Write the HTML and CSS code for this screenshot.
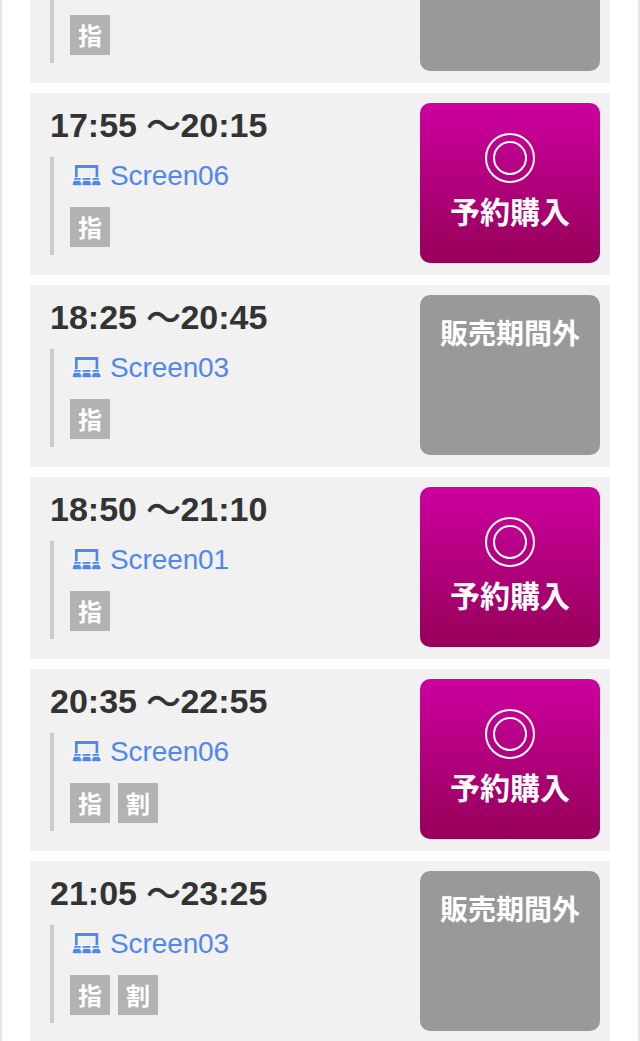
FILE: index.html
```html
<!DOCTYPE html>
<html lang="ja">
    <head>
        <meta charset="utf-8">
        <title>上映スケジュール</title>
        <link rel="stylesheet" href="styles.css">
    </head>
    <body>
        <svg class="defs" width="0" height="0">
            <symbol id="seat" viewBox="0 0 32 24">
                <path class="halo" d="M3 13h27l2 4v5.4H.8V17z"/>
                <path d="M5 1h23.2v12.2h-2.6V4H7.6v9.2H5z"/>
                <path d="M5.2 14h4.6q1 0 1 .8v1H3.6q.4-1.8 1.6-1.8zM13.4 14h6.4q1 0 1.2 1.8h-8.8q.2-1.8 1.2-1.8zM23.4 14H28q1.200 0 1.600 1.800h-7.200v-1q0-.8 1-.8z"/>
                <path d="M2.600 21.200q.2-3.900 2-4.400h4.800q1.600.4 1.800 4.400zM12.200 21.200q.2-4 1.800-4.400h5.200q1.600.4 1.800 4.400zM22 21.200q.2-4 1.800-4.400h4.800q1.800.5 2.200 4.400z"/>
            </symbol>
        </svg>
        <div id="schedule">
            <ul>
                <li class="cut">
                    <div class="info">
                        <div class="detail">
                            <p class="tags"><span>指</span></p>
                        </div>
                    </div>
                    <div class="btn off"></div>
                </li>
                <li>
                    <div class="info">
                        <p class="time">17:55 <span>〜</span>20:15</p>
                        <div class="detail">
                            <a class="screen" href="#"><svg><use href="#seat"/></svg>Screen06</a>
                            <p class="tags"><span>指</span></p>
                        </div>
                    </div>
                    <a class="btn on" href="#"><i class="mark"></i>予約購入</a>
                </li>
                <li>
                    <div class="info">
                        <p class="time">18:25 <span>〜</span>20:45</p>
                        <div class="detail">
                            <a class="screen" href="#"><svg><use href="#seat"/></svg>Screen03</a>
                            <p class="tags"><span>指</span></p>
                        </div>
                    </div>
                    <div class="btn off">販売期間外</div>
                </li>
                <li>
                    <div class="info">
                        <p class="time">18:50 <span>〜</span>21:10</p>
                        <div class="detail">
                            <a class="screen" href="#"><svg><use href="#seat"/></svg>Screen01</a>
                            <p class="tags"><span>指</span></p>
                        </div>
                    </div>
                    <a class="btn on" href="#"><i class="mark"></i>予約購入</a>
                </li>
                <li>
                    <div class="info">
                        <p class="time">20:35 <span>〜</span>22:55</p>
                        <div class="detail">
                            <a class="screen" href="#"><svg><use href="#seat"/></svg>Screen06</a>
                            <p class="tags"><span>指</span><span>割</span></p>
                        </div>
                    </div>
                    <a class="btn on" href="#"><i class="mark"></i>予約購入</a>
                </li>
                <li>
                    <div class="info">
                        <p class="time">21:05 <span>〜</span>23:25</p>
                        <div class="detail">
                            <a class="screen" href="#"><svg><use href="#seat"/></svg>Screen03</a>
                            <p class="tags"><span>指</span><span>割</span></p>
                        </div>
                    </div>
                    <div class="btn off">販売期間外</div>
                </li>
            </ul>
        </div>
    </body>
</html>
```
FILE: styles.css
```css
*{
    box-sizing:border-box;
}
body,div,ul,li,p{
    margin:0;
    padding:0;
}
body{
    font-family:"Liberation Sans","Noto Sans CJK JP",sans-serif;
    color:#333;
    background:#fff;
}
ul{
    list-style-type:none;
}
a{
    text-decoration:none;
}
.defs{
    display:block;
}
#schedule{
    height:1041px;
    padding:0 28px;
    border-left:2px solid #e6e6e6;
    border-right:2px solid #e6e6e6;
    overflow:hidden;
}
#schedule li{
    display:flex;
    justify-content:space-between;
    height:182px;
    margin-bottom:10px;
    padding:10px 10px 0 20px;
    border-radius:2px;
    background:#f1f1f1;
}
.time{
    height:54px;
    font-size:34px;
    font-weight:700;
    line-height:44px;
    white-space:nowrap;
}
.time span{
    font-family:"Noto Sans CJK JP",sans-serif;
    font-weight:400;
    line-height:1;
    vertical-align:-1px;
    -webkit-text-stroke:.8px #333;
}
.detail{
    height:98px;
    padding-left:16px;
    border-left:4px solid #ccc;
}
.screen{
    display:flex;
    height:50px;
    font-size:28px;
    line-height:37px;
    letter-spacing:-.1px;
    color:#5186ec;
}
.screen svg{
    width:32px;
    height:24px;
    margin:7px 8px 0 0;
    fill:#5186ec;
}
.halo{
    fill:#fafafa;
}
.tags{
    display:flex;
    gap:8px;
}
.tags span{
    width:40px;
    height:40px;
    font-size:24px;
    font-weight:700;
    line-height:43px;
    text-align:center;
    color:#fff;
    background:#b2b2b2;
}
.btn{
    width:180px;
    height:160px;
    border-radius:10px;
    font-family:"Noto Sans CJK JP",sans-serif;
    font-weight:700;
    text-align:center;
    color:#fff;
}
.on{
    padding-top:30px;
    font-size:30px;
    line-height:54px;
    background:linear-gradient(#cc009f,#960059);
}
.off{
    padding-top:17px;
    font-size:28px;
    line-height:40px;
    background:#999;
}
/* 二重丸 */
.mark{
    display:block;
    width:50px;
    height:50px;
    margin:0 auto;
    padding:6px;
    border:2px solid #fff;
    border-radius:50%;
}
.mark::before{
    content:"";
    display:block;
    width:34px;
    height:34px;
    box-sizing:border-box;
    border:2px solid #fff;
    border-radius:50%;
}
/* 上端で切れている行 */
#schedule .cut{
    height:83px;
    padding-top:0;
    border-radius:0 0 2px 2px;
}
.cut .detail{
    height:63px;
    padding-top:15px;
}
.cut .btn{
    height:71px;
    border-radius:0 0 10px 10px;
}
```
